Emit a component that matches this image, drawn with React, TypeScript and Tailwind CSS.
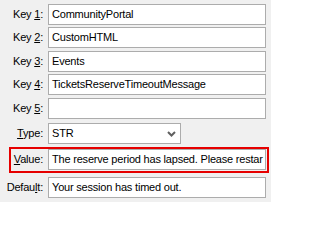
import React from "react";

type Field = { label: React.ReactNode; value: string };

const keys: Field[] = [
  { label: <>Key <u>1</u>:</>, value: "CommunityPortal" },
  { label: <>Key <u>2</u>:</>, value: "CustomHTML" },
  { label: <>Key <u>3</u>:</>, value: "Events" },
  { label: <>Key <u>4</u>:</>, value: "TicketsReserveTimeoutMessage" },
  { label: <>Key <u>5</u>:</>, value: "" },
];

// top margin of each key row, so rows land on the dialog's uneven pitch
const gaps = ["mt-[4px]", "mt-[2px]", "mt-[3px]", "mt-[2px]", "mt-[3px]"];

const BOX =
  "h-[21px] flex items-center px-[3px] bg-white border border-[#acacac] whitespace-nowrap overflow-hidden";

const Label = ({ children }: { children: React.ReactNode }) => (
  <div className="w-[44px] shrink-0 text-right pr-px whitespace-nowrap">{children}</div>
);

export default function App() {
  return (
    <div
      className="w-[271px] h-[202px] bg-[#f0f0f0] text-black text-[11px] leading-none tracking-[-0.2px] overflow-hidden"
      style={{ fontFamily: '"Liberation Sans", Tahoma, sans-serif' }}
    >
      {keys.map((k, i) => (
        <div key={i} className={`${gaps[i]} flex items-center gap-[4px] pr-[5px]`}>
          <Label>{k.label}</Label>
          <div className={`${BOX} flex-1`}>{k.value}</div>
        </div>
      ))}

      <div className="mt-[4px] flex items-center gap-[4px]">
        <Label>
          <u>T</u>ype:
        </Label>
        <div className={`${BOX} w-[133px] justify-between`}>
          <span>STR</span>
          <svg width="9" height="6" viewBox="0 0 9 6" className="mr-[1px]">
            <path d="M1 1 L4.5 4.5 L8 1" fill="none" stroke="#606060" strokeWidth="2" />
          </svg>
        </div>
      </div>

      <div className="mt-[3px] ml-[9px] mr-[2px] border-2 border-[#e60000] pb-px pr-px flex items-center gap-[4px]">
        <div className="w-[33px] shrink-0 text-right pr-px">
          <u>V</u>alue:
        </div>
        <div className={`${BOX} flex-1`}>The reserve period has lapsed. Please restar</div>
      </div>

      <div className="mt-[4px] flex items-center gap-[4px] pr-[5px]">
        <Label>
          Defau<u>l</u>t:
        </Label>
        <div className={`${BOX} flex-1`}>Your session has timed out.</div>
      </div>
    </div>
  );
}
